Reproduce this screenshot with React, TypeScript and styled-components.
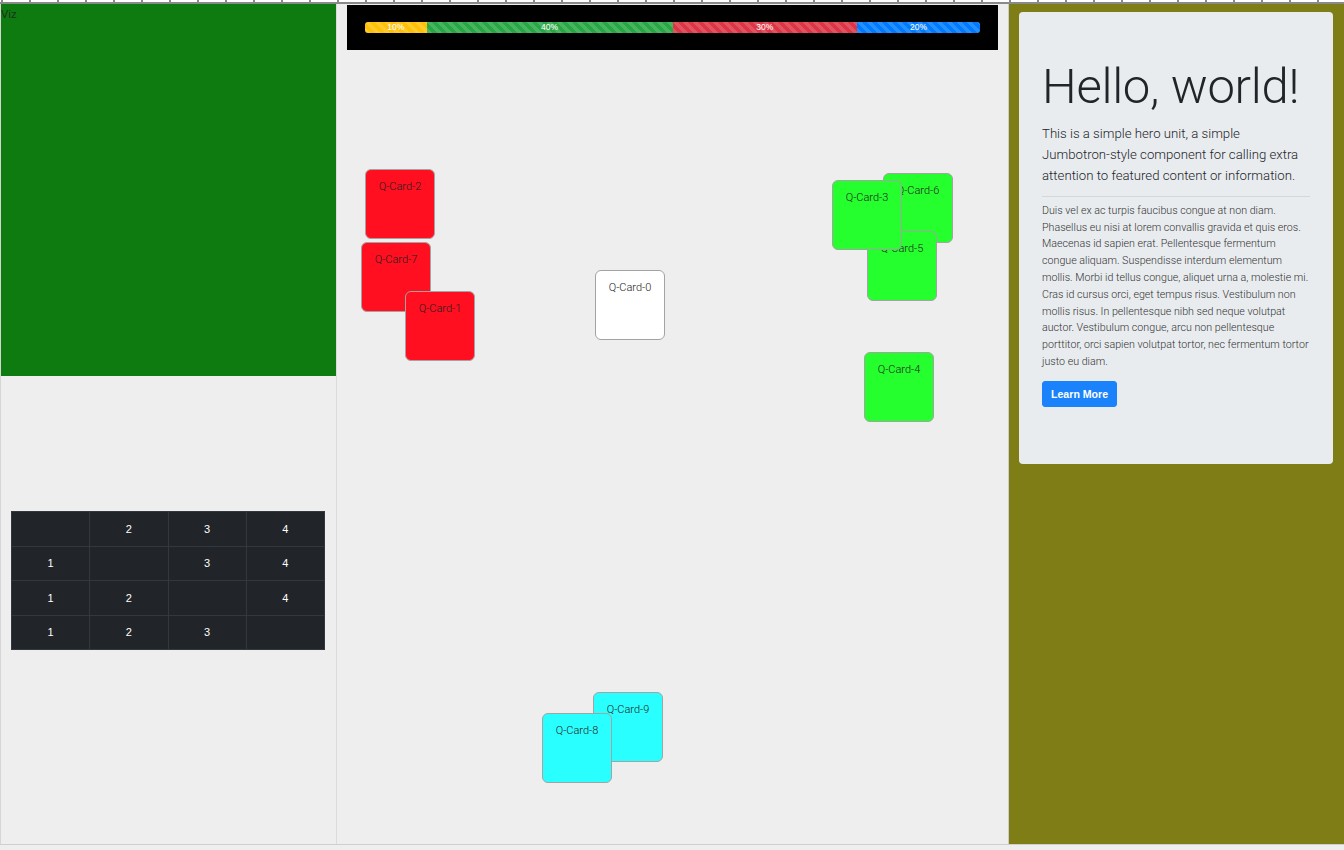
import React from "react";
import styled, { createGlobalStyle } from "styled-components";

const Global = createGlobalStyle`
  html, body { margin: 0; padding: 0; background: #eeeeee; }
  body { font-family: Roboto, "Liberation Sans", Arial, sans-serif; color: #212529; }
  * { box-sizing: border-box; }
`;

const Ruler = styled.div`
  height: 4px;
  background:
    repeating-linear-gradient(90deg, transparent 0 1px, #8a8a8a 1px 3px, transparent 3px 28px) top / 100% 2px no-repeat,
    #ffffff;
  border-bottom: 2px solid #8a8a8a;
`;

const Frame = styled.div`
  display: grid;
  grid-template-columns: 336px 672px 335px;
  height: 841px;
  border-left: 1px solid #d6d6d6;
  border-bottom: 1px solid #cfcfcf;
`;

const LeftCol = styled.div`
  border-right: 1px solid #dcdcdc;
  display: flex;
  flex-direction: column;
`;

const VizBox = styled.div`
  height: 372px;
  background: #0e7b11;
  color: #1a331a;
  font-size: 11.5px;
  line-height: 1;
  padding: 5px 0 0 0;
  font-weight: 400;
`;

const Table = styled.table`
  margin: 135px 10px 0 10px;
  width: 314px;
  border-collapse: collapse;
  background: #212529;
  color: #ffffff;
  font-family: "Liberation Sans", Arial, sans-serif;
  font-size: 11px;
`;

const Cell = styled.td`
  border: 1px solid #32383e;
  height: 34.5px;
  width: 25%;
  text-align: center;
  padding: 0;
`;

const MidCol = styled.div`
  position: relative;
  border-right: 1px solid #cccccc;
  padding: 1px 10px 0 10px;
`;

const ProgressBox = styled.div`
  height: 45px;
  background: #000000;
  display: flex;
  align-items: center;
  padding: 0 18px;
`;

const Progress = styled.div`
  display: flex;
  width: 100%;
  height: 11px;
  border-radius: 3px;
  overflow: hidden;
`;

const Segment = styled.div<{ $color: string; $pct: number }>`
  width: ${(p) => p.$pct}%;
  background-color: ${(p) => p.$color};
  background-image: linear-gradient(
    45deg,
    rgba(255, 255, 255, 0.15) 25%,
    transparent 25%,
    transparent 50%,
    rgba(255, 255, 255, 0.15) 50%,
    rgba(255, 255, 255, 0.15) 75%,
    transparent 75%,
    transparent
  );
  background-size: 10px 10px;
  color: #ffffff;
  font-family: "Liberation Sans", Arial, sans-serif;
  font-size: 8.5px;
  line-height: 11px;
  text-align: center;
`;

const Card = styled.div<{ $bg: string }>`
  position: absolute;
  width: 70px;
  height: 70px;
  background: ${(p) => p.$bg};
  border: 1px solid #a3a3a3;
  border-radius: 6px;
  font-size: 11px;
  font-weight: 300;
  color: #222;
  text-align: center;
  padding-top: 10px;
  line-height: 13px;
`;

const RightCol = styled.div`
  background: #7e7d16;
  padding: 8px 11px 0 10px;
`;

const Jumbo = styled.div`
  background: #e9ecef;
  border-radius: 4px;
  height: 452px;
  padding: 46px 21px 0 23px;
`;

const Title = styled.h1`
  margin: 0 0 6px 0;
  font-size: 49px;
  font-weight: 300;
  line-height: 1.2;
  letter-spacing: -0.3px;
  white-space: nowrap;
`;

const Lead = styled.p`
  margin: 0 3px 0 0;
  font-size: 13.2px;
  font-weight: 300;
  line-height: 21px;
`;

const Rule = styled.hr`
  border: 0;
  border-top: 1px solid #d5d8db;
  margin: 10px 2px 6px 0;
`;

const Body = styled.p`
  margin: 0 0 10px 0;
  font-size: 10.7px;
  font-weight: 300;
  line-height: 16.8px;
  color: #333;
`;

const Button = styled.button`
  background: #1a82fb;
  color: #ffffff;
  border: 1px solid #1a82fb;
  border-radius: 3px;
  height: 26px;
  padding: 0 8px;
  font-family: "Liberation Sans", Arial, sans-serif;
  font-size: 10.6px;
  font-weight: 700;
  cursor: pointer;
`;

const cards: { n: number; x: number; y: number; bg: string }[] = [
  { n: 2, x: 28, y: 165, bg: "#ff0f1f" },
  { n: 7, x: 24, y: 238, bg: "#ff0f1f" },
  { n: 1, x: 68, y: 287, bg: "#ff0f1f" },
  { n: 0, x: 258, y: 266, bg: "#ffffff" },
  { n: 6, x: 546, y: 169, bg: "#26ff2e" },
  { n: 5, x: 530, y: 227, bg: "#26ff2e" },
  { n: 3, x: 495, y: 176, bg: "#26ff2e" },
  { n: 4, x: 527, y: 348, bg: "#26ff2e" },
  { n: 9, x: 256, y: 688, bg: "#2affff" },
  { n: 8, x: 205, y: 709, bg: "#2affff" },
];

const rows = [
  ["", "2", "3", "4"],
  ["1", "", "3", "4"],
  ["1", "2", "", "4"],
  ["1", "2", "3", ""],
];

export default function App() {
  return (
    <>
      <Global />
      <Ruler />
      <Frame>
        <LeftCol>
          <VizBox>Viz</VizBox>
          <Table>
            <tbody>
              {rows.map((r, i) => (
                <tr key={i}>
                  {r.map((c, j) => (
                    <Cell key={j}>{c}</Cell>
                  ))}
                </tr>
              ))}
            </tbody>
          </Table>
        </LeftCol>
        <MidCol>
          <ProgressBox>
            <Progress>
              <Segment $color="#ffc107" $pct={10}>10%</Segment>
              <Segment $color="#28a745" $pct={40}>40%</Segment>
              <Segment $color="#dc3545" $pct={30}>30%</Segment>
              <Segment $color="#007bff" $pct={20}>20%</Segment>
            </Progress>
          </ProgressBox>
          {cards.map((c) => (
            <Card key={c.n} $bg={c.bg} style={{ left: c.x, top: c.y }}>
              Q-Card-{c.n}
            </Card>
          ))}
        </MidCol>
        <RightCol>
          <Jumbo>
            <Title>Hello, world!</Title>
            <Lead>
              This is a simple hero unit, a simple Jumbotron-style component for calling extra
              attention to featured content or information.
            </Lead>
            <Rule />
            <Body>
              Duis vel ex ac turpis faucibus congue at non diam. Phasellus eu nisi at lorem convallis
              gravida et quis eros. Maecenas id sapien erat. Pellentesque fermentum congue aliquam.
              Suspendisse interdum elementum mollis. Morbi id tellus congue, aliquet urna a, molestie
              mi. Cras id cursus orci, eget tempus risus. Vestibulum non mollis risus. In pellentesque
              nibh sed neque volutpat auctor. Vestibulum congue, arcu non pellentesque porttitor, orci
              sapien volutpat tortor, nec fermentum tortor justo eu diam.
            </Body>
            <Button>Learn More</Button>
          </Jumbo>
        </RightCol>
      </Frame>
    </>
  );
}
